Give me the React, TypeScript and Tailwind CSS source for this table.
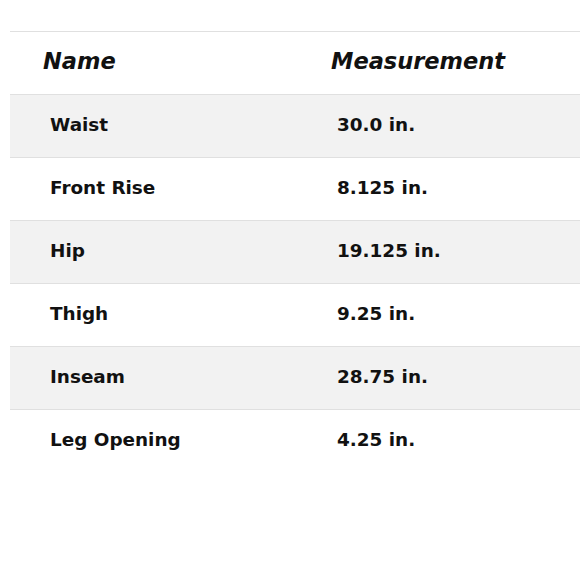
const rows = [
  { name: 'Waist', value: '30.0 in.' },
  { name: 'Front Rise', value: '8.125 in.' },
  { name: 'Hip', value: '19.125 in.' },
  { name: 'Thigh', value: '9.25 in.' },
  { name: 'Inseam', value: '28.75 in.' },
  { name: 'Leg Opening', value: '4.25 in.' },
]

export default function App() {
  return (
    <div className="h-[580px] w-[580px] overflow-hidden bg-white pt-[31px] pl-[10px] font-['DejaVu_Sans',sans-serif] text-[#111]">
      <div className="w-[570px]">
        {/* Header */}
        <div className="grid h-[63px] grid-cols-[287px_1fr] items-center border-t border-[#e0e0e0] pb-[2px] text-[22.5px] font-bold italic">
          <div className="pl-[33px]">Name</div>
          <div className="pl-[34px]">Measurement</div>
        </div>

        {rows.map((r, i) => (
          <div
            key={r.name}
            className={
              'grid h-[63px] grid-cols-[287px_1fr] items-center border-t border-[#e0e0e0] pb-[2px] text-[18.4px] font-bold ' +
              (i % 2 === 0 ? 'bg-[#f2f2f2]' : 'bg-white')
            }
          >
            <div className="pl-[40px]">{r.name}</div>
            <div className="pl-[40px]">{r.value}</div>
          </div>
        ))}
      </div>
    </div>
  )
}
